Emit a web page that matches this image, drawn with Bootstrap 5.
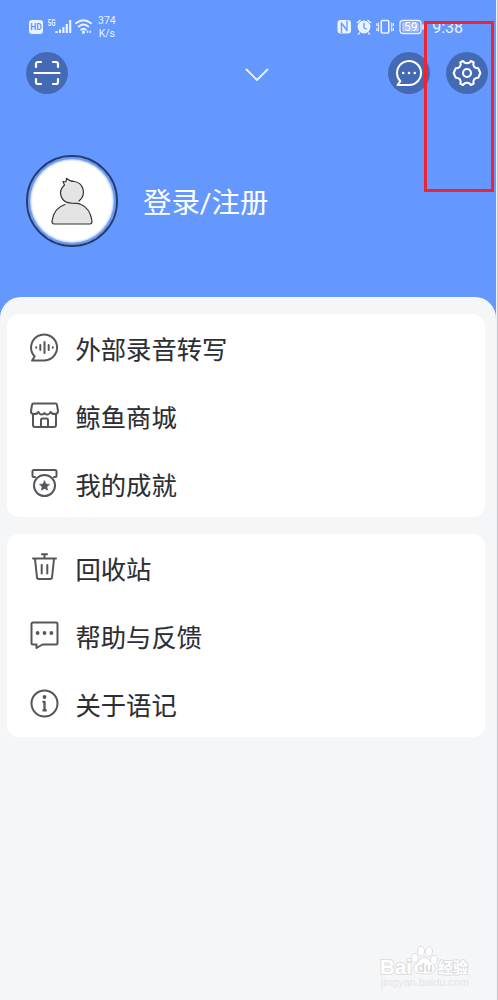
<!DOCTYPE html>
<html lang="zh-CN">
<head>
<meta charset="utf-8">
<meta name="viewport" content="width=device-width, initial-scale=1">
<title>语记</title>
<link href="https://cdn.jsdelivr.net/npm/bootstrap@5.3.0/dist/css/bootstrap.min.css" rel="stylesheet">
<style>
body{font-family:Roboto,"Noto Sans CJK SC",sans-serif;background:#6498fe;color:#2c2e33;height:1000px;overflow:hidden}
svg{display:block;flex:none;stroke-linecap:round;stroke-linejoin:round}
svg:not([fill]){fill:none}
svg:not([stroke]){stroke:currentColor}
.screen{height:1000px;border-right:1px solid #c4c6ca}
.screen-inner{height:1000px;border-right:1px solid #f0f3fa}
.status{height:52px;padding:17px 33px 0 28px;color:#e9f2ff}
.status .speed{font-size:10.5px;line-height:13px;margin:-3px 0 0 6px;text-align:center}
.status .clock{font-size:16px;line-height:20px;margin:1px 0 0 8px}
.tools{height:42px;padding:0 8px 0 26px}
.round-btn{width:42px;height:42px;background:#456ab5;color:#fff;border:0;padding:0}
.profile{padding:61px 0 0 26px;height:203px}
.avatar{width:92px;height:92px;border:2px solid #233e77;background:#fff;box-shadow:inset 0 0 0 2px #6f9bed,inset 0 0 2px 3px #a9c5fb}
.login{font-size:28.4px;line-height:36px;margin:31px 0 0 25px}
.sheet{height:703px;background:#f5f6f8;border-radius:21px 21px 0 0;padding:17px 11px 0 7px}
.menu-card{border-radius:12px;background:#fff;height:203px;margin-bottom:17px}
.menu-row{height:67.7px;padding:0 0 0 22px;font-size:25.3px;line-height:36px;gap:15.5px}
.menu-row svg{color:#55565a;stroke-width:2}
.menu-row span{padding-top:6px;margin-bottom:-1px;-webkit-text-stroke:.1px #2c2e33}
.highlight{left:424px;top:21px;width:70px;height:171px;border:3px solid #ee2430}
.brand-mark{left:378px;top:938px}
</style>
</head>
<body>
<div class="screen position-relative"><div class="screen-inner">
<header class="status d-flex justify-content-between align-items-start">
  <div class="d-flex align-items-start">
    <svg width="47" height="20" viewBox="0 0 47 20" stroke="none">
      <rect x="1" y="3" width="14" height="14" rx="3" fill="#e9f2ff"/>
      <text x="2.300" y="13.400" font-family="Roboto" font-weight="700" font-size="8.500" fill="#6498fe">HD</text>
      <text x="19.800" y="8.500" font-family="Roboto" font-weight="700" font-size="9" fill="#e9f2ff" textLength="7.700" lengthAdjust="spacingAndGlyphs">5G</text>
      <path d="M28.500 14v2M32 12.500v3.500M35.400 10v6M38.800 7v9M42.200 3v13" stroke="#e9f2ff" stroke-width="2.200" stroke-linecap="butt"/>
    </svg>
    <svg width="17" height="20" viewBox="0 0 17 20" stroke-width="1.900"><path d="M1 6.200q7.500-6 15 0M3.700 9.600q5-4 9.600 0M6.200 12.700q2.300-1.900 4.600 0"/><circle cx="8.500" cy="15.200" r=".7"/><path d="M12.600 14.200v1M15.300 14.200v1" stroke-width="1.500"/></svg>
    <div class="speed">374<br>K/s</div>
  </div>
  <div class="d-flex align-items-start">
    <svg width="87" height="20" viewBox="0 0 87 20" stroke-width="1.600">
      <rect x=".5" y="3" width="13.500" height="13.500" rx="3" fill="#e9f2ff" stroke="none"/><path d="M4.500 16V6l5.500 7.500V3.500" stroke="#6498fe" stroke-width="1.300" stroke-linecap="butt"/>
      <circle cx="27" cy="10" r="6.400" fill="#e9f2ff" stroke="none"/><path d="M20.500 5.500l2.500-2M33.500 5.500l-2.500-2M22.500 16l-1 .8M31.500 16l1 .8"/><path d="M27 6.500V11l2.500 1" stroke="#6498fe" stroke-width="1.300"/>
      <rect x="44.300" y="3.500" width="7.500" height="12.500" rx="1"/><path d="M41.500 6v8M39.800 6.500v2M39.800 11.500v2M54.700 6v8M56.400 6.500v2M56.400 11.500v2" stroke-width="1.200"/>
      <rect x="63" y="3.500" width="21" height="13" rx="3" stroke-width="1.300"/><rect x="65.300" y="5.500" width="16.500" height="9" rx="1" fill="#b8d0ff" stroke="none"/><path d="M86 8v4" stroke-width="1.500"/>
      <text x="67" y="14.300" font-family="Roboto" font-size="12" font-weight="500" fill="#fff" stroke="#7ba6fc" stroke-width="1.200" paint-order="stroke">59</text>
    </svg>
    <div class="clock">9:38</div>
  </div>
</header>
<nav class="tools d-flex align-items-center justify-content-between">
  <button class="round-btn rounded-circle d-flex align-items-center justify-content-center" aria-label="扫描">
    <svg width="28" height="28" viewBox="0 0 28 28" stroke-width="2.200"><path d="M1.500 14h25M3 8V5q0-2 2-2h3M20 3h3q2 0 2 2v3M25 20v3q0 2-2 2h-3M8 25H5q-2 0-2-2v-3"/></svg>
  </button>
  <svg width="24" height="14" viewBox="0 0 24 14" stroke="#e8f3ff" stroke-width="1.900" style="margin-left:57px;margin-top:3px"><path d="M1.500 1.500L12 12 22.500 1.500"/></svg>
  <div class="d-flex" style="gap:16px">
    <button class="round-btn rounded-circle d-flex align-items-center justify-content-center" aria-label="消息">
      <svg width="28" height="28" viewBox="0 0 28 28" stroke-width="2"><path d="M14 26H2.500l2.800-3.800A12 12 0 1 1 14 26z"/><g fill="#fff" stroke="none"><circle cx="8.200" cy="14" r="1.300"/><circle cx="14" cy="14" r="1.300"/><circle cx="19.800" cy="14" r="1.300"/></g></svg>
    </button>
    <button class="round-btn rounded-circle d-flex align-items-center justify-content-center" aria-label="设置">
      <svg width="30" height="30" viewBox="0 0 30 30" stroke-width="2.100"><path d="M8.400 4.200L11.100 3q1.100 2.200 3.900 2.200T18.900 3l2.700 1.200Q20.800 7 22.200 8.700q1.400 1.600 4.100 1.600l2 4.700-2 4.700q-2.700 0-4.100 1.600Q20.800 23 21.600 25.800L18.900 27q-1.100-2.200-3.900-2.200T11.100 27l-2.700-1.200Q9.200 23 7.800 21.300 6.400 19.700 3.700 19.700L1.700 15l2-4.700q2.700 0 4.100-1.600Q9.200 7 8.400 4.200z"/><circle cx="15" cy="15" r="4"/></svg>
    </button>
  </div>
</nav>
<section class="profile d-flex align-items-start">
  <div class="avatar rounded-circle d-flex align-items-center justify-content-center">
    <svg width="42" height="48" viewBox="0 0 42 48" stroke="#333" stroke-width="1.200" fill="#e4e4e4"><path stroke="none" d="M1 45Q2 26 20.500 26T41 45q0 2-2 2H3q-2 0-2-2z"/><circle stroke="none" cx="21" cy="15.500" r="11"/><path fill="none" d="M28 24Q34 19 32 12q-2-6.500-8.500-7.500-5-.2-8-3L15 5l-3-.5 1.500 3.500Q8 13 10 19q2.500 7 10.500 7.200 7 0 9.500 1.300Q39 31 41 44q0 3-2 3H3q-2 0-2-3 2-13 13-16.500"/></svg>
  </div>
  <div class="login text-white">登录/注册</div>
</section>
<main class="sheet">
  <div class="menu-card">
    <div class="menu-row d-flex align-items-center">
      <svg width="31" height="31" viewBox="0 0 31 31"><path d="M15.500 28.500H3l2.700-4A13 13 0 1 1 15.500 28.500z"/><path d="M7.200 15.300v.4M11.300 13v5M15.500 10v11M19.700 13v5M23.800 15.300v.4"/></svg><span>外部录音转写</span></div>
    <div class="menu-row d-flex align-items-center">
      <svg width="31" height="31" viewBox="0 0 31 31"><path d="M4.500 3.500h22q1.300 0 1.500 1.500L29 11q0 3-3 3-3.500 0-4.500-2-1 2.500-3.500 2.500-2 0-2.500-1.500-1 1.500-3 1.500-2 0-3-2.500-1 2-4.500 2-3.500 0-3-3L3 5q.2-1.500 1.500-1.500zM4 14v11q0 2 2 2h19q2 0 2-2V14M12 27v-7q0-1.500 1.500-1.500h4q1.500 0 1.500 1.500v7"/></svg><span>鲸鱼商城</span></div>
    <div class="menu-row d-flex align-items-center">
      <svg width="31" height="31" viewBox="0 0 31 31"><path d="M6 9H4.500Q3.500 9 3.500 8V3.500Q3.500 2 5 2h21q1.500 0 1.500 1.500V8q0 1-1 1H25"/><circle cx="15.500" cy="17.500" r="10.500"/><path d="M15.500 12.800l1.500 3.200 3.500.4-2.600 2.400.7 3.400-3.100-1.700-3.100 1.700.7-3.400-2.600-2.400 3.500-.4z" fill="currentColor" stroke-width=".6"/></svg><span>我的成就</span></div>
  </div>
  <div class="menu-card">
    <div class="menu-row d-flex align-items-center">
      <svg width="31" height="31" viewBox="0 0 31 31"><path d="M4 6.500h23M13 2.200h5M15.500 2.500v4M6 7l2 18.500q.2 1.500 1.700 1.500h11.600q1.500 0 1.700-1.500L25 7M12.700 13v8.500M18.300 13v8.500"/></svg><span>回收站</span></div>
    <div class="menu-row d-flex align-items-center">
      <svg width="31" height="31" viewBox="0 0 31 31"><path d="M4 2.500h23q1.500 0 1.500 1.500v19q0 1.500-1.500 1.500H13.500l-6 3.500v-3.500H4Q2.500 24.500 2.500 23V4Q2.500 2.500 4 2.500z"/><g fill="currentColor" stroke="none"><circle cx="8.600" cy="13" r="1.900"/><circle cx="15.500" cy="13" r="1.900"/><circle cx="22.400" cy="13" r="1.900"/></g></svg><span>帮助与反馈</span></div>
    <div class="menu-row d-flex align-items-center">
      <svg width="31" height="31" viewBox="0 0 31 31"><circle cx="15.500" cy="15.500" r="13"/><circle cx="15.500" cy="9" r="1.900" fill="currentColor" stroke="none"/><path d="M13.500 13.800h2v8.500M13.500 22.300h4.300" stroke-width="2.300" stroke-linecap="butt"/></svg><span>关于语记</span></div>
  </div>
</main>
</div>
<div class="highlight position-absolute"></div>
<svg class="brand-mark position-absolute" width="96" height="54" viewBox="0 0 96 54" stroke="#dcdee1" stroke-width="1" fill="#fff">
  <g font-family="Liberation Sans" font-weight="700" paint-order="stroke" stroke-width="2">
    <text x="2" y="36" font-size="21" textLength="32" lengthAdjust="spacingAndGlyphs">Bai</text>
    <text x="60" y="35" font-size="15" font-family="Noto Sans CJK SC" textLength="30">经验</text>
    <text x="3" y="48" font-size="10" stroke="none" fill="#e3e5e8" font-weight="400" textLength="88" lengthAdjust="spacingAndGlyphs">jingyan.baidu.com</text>
  </g>
  <ellipse cx="37" cy="20" rx="3.500" ry="4.500"/><ellipse cx="43" cy="13" rx="3.500" ry="4.800"/><ellipse cx="51" cy="13.500" rx="3.500" ry="4.800"/><ellipse cx="56" cy="22" rx="3.500" ry="4.500"/>
  <path d="M46.500 19q3 0 5 3.500l5 5q2 4-.5 6.500-2 2.500-9.500 2T37 34q-2.500-2.500-.5-6.500l5-5q2-3.500 5-3.500z"/>
  <text x="39" y="34" font-family="Liberation Sans" font-size="13" font-weight="700" fill="#d9dbde" stroke="none">du</text>
</svg>
</div>
<script src="https://cdn.jsdelivr.net/npm/bootstrap@5.3.0/dist/js/bootstrap.bundle.min.js"></script>
</body>
</html>
